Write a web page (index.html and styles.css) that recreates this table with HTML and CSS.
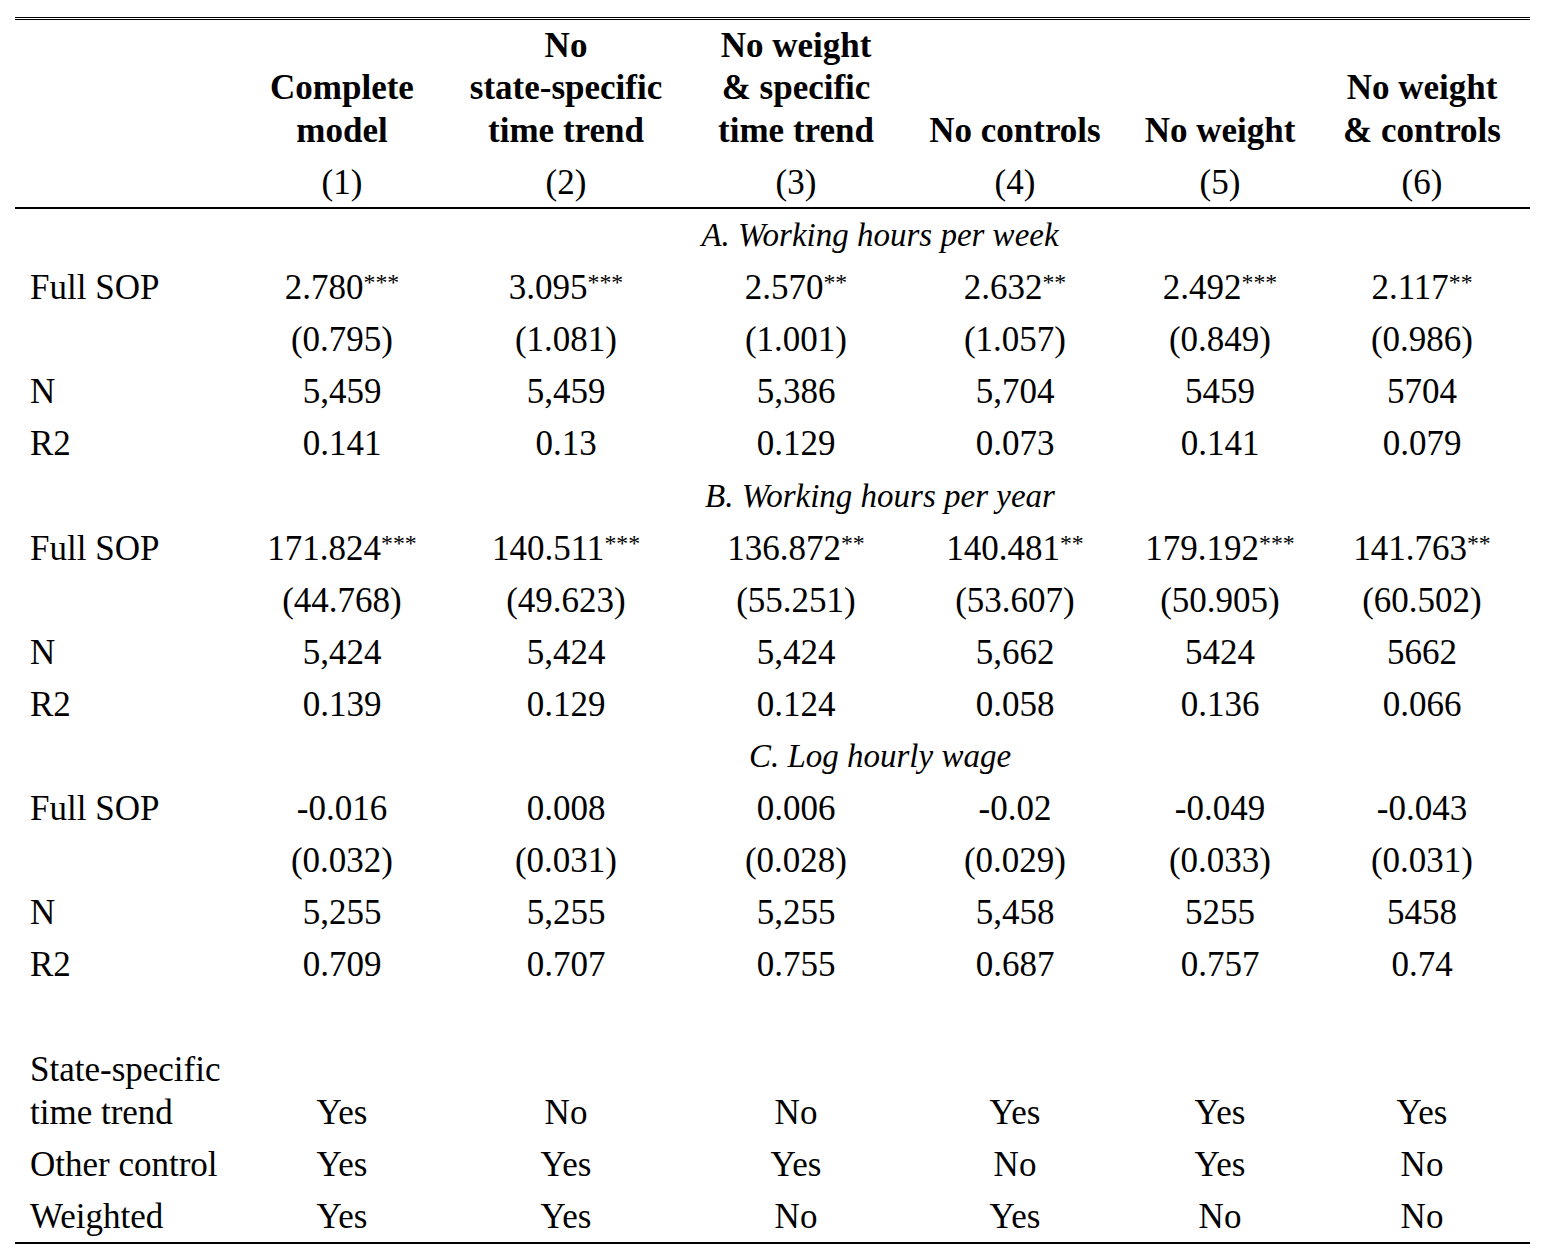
FILE: index.html
```html
<!DOCTYPE html>
<html lang="en">
<head>
<meta charset="utf-8">
<title>Regression table</title>
<link rel="stylesheet" href="styles.css">
</head>
<body>
<div class="page">
<table class="reg">
  <colgroup>
    <col class="c-label">
    <col class="c1"><col class="c2"><col class="c3"><col class="c4"><col class="c5"><col class="c6">
  </colgroup>
  <thead>
    <tr class="head-titles">
      <th></th>
      <th>Complete<br>model</th>
      <th>No<br>state-specific<br>time trend</th>
      <th>No weight<br>&amp; specific<br>time trend</th>
      <th>No controls</th>
      <th>No weight</th>
      <th class="last-col">No weight<br>&amp; controls</th>
    </tr>
    <tr class="head-nums">
      <td></td><td>(1)</td><td>(2)</td><td>(3)</td><td>(4)</td><td>(5)</td><td class="last-col">(6)</td>
    </tr>
  </thead>
  <tbody>
    <tr class="section"><td></td><td colspan="6">A. Working hours per week</td></tr>
    <tr><td class="lbl">Full SOP</td><td>2.780<sup>***</sup></td><td>3.095<sup>***</sup></td><td>2.570<sup>**</sup></td><td>2.632<sup>**</sup></td><td>2.492<sup>***</sup></td><td class="last-col">2.117<sup>**</sup></td></tr>
    <tr><td class="lbl"></td><td>(0.795)</td><td>(1.081)</td><td>(1.001)</td><td>(1.057)</td><td>(0.849)</td><td class="last-col">(0.986)</td></tr>
    <tr><td class="lbl">N</td><td>5,459</td><td>5,459</td><td>5,386</td><td>5,704</td><td>5459</td><td class="last-col">5704</td></tr>
    <tr><td class="lbl">R2</td><td>0.141</td><td>0.13</td><td>0.129</td><td>0.073</td><td>0.141</td><td class="last-col">0.079</td></tr>

    <tr class="section"><td></td><td colspan="6">B. Working hours per year</td></tr>
    <tr><td class="lbl">Full SOP</td><td>171.824<sup>***</sup></td><td>140.511<sup>***</sup></td><td>136.872<sup>**</sup></td><td>140.481<sup>**</sup></td><td>179.192<sup>***</sup></td><td class="last-col">141.763<sup>**</sup></td></tr>
    <tr><td class="lbl"></td><td>(44.768)</td><td>(49.623)</td><td>(55.251)</td><td>(53.607)</td><td>(50.905)</td><td class="last-col">(60.502)</td></tr>
    <tr><td class="lbl">N</td><td>5,424</td><td>5,424</td><td>5,424</td><td>5,662</td><td>5424</td><td class="last-col">5662</td></tr>
    <tr><td class="lbl">R2</td><td>0.139</td><td>0.129</td><td>0.124</td><td>0.058</td><td>0.136</td><td class="last-col">0.066</td></tr>

    <tr class="section"><td></td><td colspan="6">C. Log hourly wage</td></tr>
    <tr><td class="lbl">Full SOP</td><td>-0.016</td><td>0.008</td><td>0.006</td><td>-0.02</td><td>-0.049</td><td class="last-col">-0.043</td></tr>
    <tr><td class="lbl"></td><td>(0.032)</td><td>(0.031)</td><td>(0.028)</td><td>(0.029)</td><td>(0.033)</td><td class="last-col">(0.031)</td></tr>
    <tr><td class="lbl">N</td><td>5,255</td><td>5,255</td><td>5,255</td><td>5,458</td><td>5255</td><td class="last-col">5458</td></tr>
    <tr><td class="lbl">R2</td><td>0.709</td><td>0.707</td><td>0.755</td><td>0.687</td><td>0.757</td><td class="last-col">0.74</td></tr>

    <tr class="blank"><td class="lbl">&nbsp;</td><td></td><td></td><td></td><td></td><td></td><td></td></tr>
    <tr class="bottom-align"><td class="lbl">State-specific<br>time trend</td><td>Yes</td><td>No</td><td>No</td><td>Yes</td><td>Yes</td><td class="last-col">Yes</td></tr>
    <tr><td class="lbl">Other control</td><td>Yes</td><td>Yes</td><td>Yes</td><td>No</td><td>Yes</td><td class="last-col">No</td></tr>
    <tr class="last"><td class="lbl">Weighted</td><td>Yes</td><td>Yes</td><td>No</td><td>Yes</td><td>No</td><td class="last-col">No</td></tr>
  </tbody>
</table>
</div>
</body>
</html>
```

FILE: styles.css
```css
html, body {
  margin: 0;
  padding: 0;
  background: #ffffff;
}

.page {
  padding: 17px 11px 0 15px;
}

.reg {
  width: 1515px;
  table-layout: fixed;
  border-collapse: collapse;
  font-family: "Liberation Serif", "Times New Roman", serif;
  font-size: 35px;
  color: #000;
  border-top: 3px double #000;
  border-bottom: 2px solid #000;
}

.c-label { width: 215px; }
.c1 { width: 224px; }
.c2 { width: 224px; }
.c3 { width: 236px; }
.c4 { width: 202px; }
.c5 { width: 208px; }
.c6 { width: 206px; }

.reg th,
.reg td {
  text-align: center;
  padding: 5.1px 0 4px;
  line-height: 43px;
  font-weight: normal;
  white-space: nowrap;
}

.reg .last-col {
  padding-right: 10px;
}

.head-titles th {
  font-weight: bold;
  line-height: 42.5px;
  vertical-align: bottom;
  padding: 4.5px 0 0;
}

.head-titles th.last-col {
  padding-right: 10px;
}

.head-nums td {
  line-height: 42.5px;
  padding: 10px 0 2.5px;
}

.head-nums td.last-col {
  padding-right: 10px;
}

.head-nums {
  border-bottom: 2px solid #000;
}

.reg td.lbl {
  text-align: left;
  padding-left: 15px;
}

.section td {
  font-style: italic;
  font-size: 33px;
}

.bottom-align td {
  vertical-align: bottom;
}

.reg sup {
  font-size: 0.68em;
  line-height: 0;
  vertical-align: 0.36em;
}
```
